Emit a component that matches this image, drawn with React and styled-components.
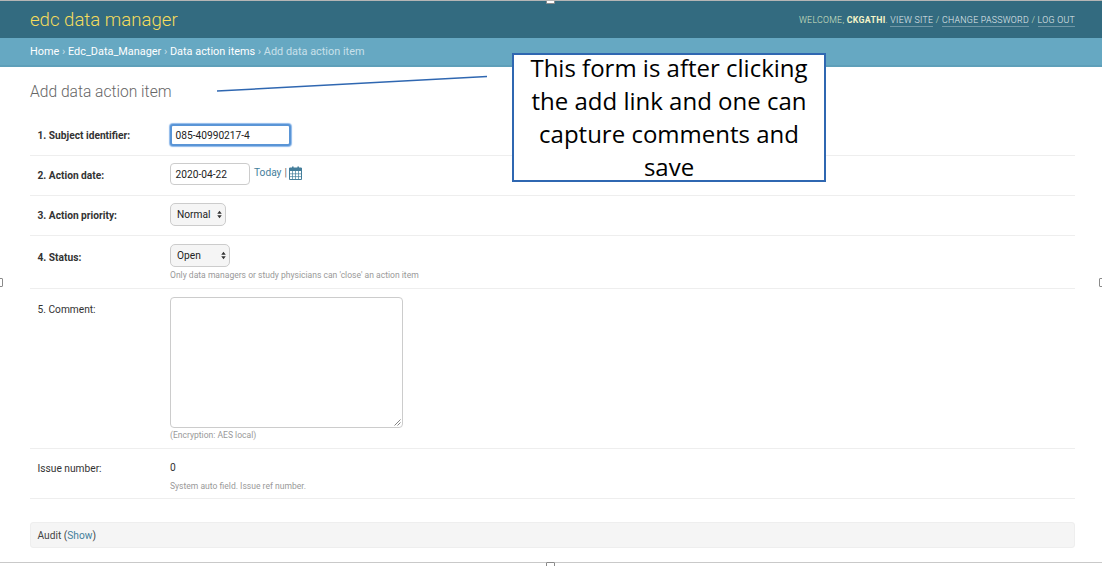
import React from 'react';
import styled, { createGlobalStyle } from 'styled-components';

const GlobalStyle = createGlobalStyle`
  html, body {
    margin: 0;
    padding: 0;
    background: #fff;
  }
  body {
    font-family: Roboto, "Liberation Sans", sans-serif;
    color: #333;
  }
`;

const Page = styled.div`
  position: relative;
  width: 1102px;
  height: 566px;
  overflow: hidden;
  box-sizing: border-box;
  border-top: 1px solid #b5b5b5;
`;

const Header = styled.header`
  display: flex;
  justify-content: space-between;
  align-items: center;
  height: 37px;
  padding: 0 27px 0 30px;
  background: #336b80;
`;

const Brand = styled.div`
  color: #f5dd5d;
  font-size: 18.6px;
  font-weight: 300;
`;

const UserTools = styled.div`
  color: #d8e6c4;
  font-size: 8.75px;
  letter-spacing: 0.3px;
  font-weight: 300;
  text-transform: uppercase;
  strong {
    font-weight: 700;
    color: #f5f5c8;
  }
`;

const ToolLink = styled.a`
  color: #e6eef0;
  border-bottom: 1px solid rgba(255, 255, 255, 0.3);
  padding-bottom: 1px;
`;

const Breadcrumbs = styled.nav`
  display: flex;
  align-items: center;
  height: 27px;
  padding: 0 30px;
  background: #66a8c2;
  border-bottom: 2px solid #5e9fb9;
  color: #c8e0ea;
  font-size: 10.9px;
  white-space: pre;
`;

const Crumb = styled.a`
  color: #fff;
`;

const Content = styled.main`
  padding: 0 27px 0 30px;
`;

const Title = styled.h1`
  margin: 0;
  padding: 16px 0 0;
  height: 48px;
  box-sizing: border-box;
  font-size: 15.6px;
  line-height: 18px;
  font-weight: 300;
  color: #666;
`;

const Row = styled.div`
  display: grid;
  grid-template-columns: 140px 1fr;
  height: ${(p) => p.$height}px;
  padding: ${(p) => p.$top}px 0 0;
  box-sizing: border-box;
  border-bottom: 1px solid #eee;
`;

const Label = styled.label`
  padding: ${(p) => p.$top ?? 5}px 0 0 7.5px;
  font-size: 10.2px;
  line-height: 13px;
  font-weight: ${(p) => (p.$bold ? 700 : 400)};
  color: #333;
`;

const Field = styled.div`
  display: flex;
  flex-direction: column;
  align-items: flex-start;
`;

const Inline = styled.div`
  display: flex;
  align-items: center;
`;

const TextInput = styled.div`
  box-sizing: border-box;
  width: ${(p) => p.$width}px;
  height: 22px;
  padding: 0 4.5px;
  display: flex;
  align-items: center;
  background: #fff;
  border: 1px solid #ccc;
  border-radius: 4px;
  font-size: 10.2px;
  color: #222;
  ${(p) => p.$focused && `
    border: 2px solid #5a95d6;
    border-radius: 3px;
    box-shadow: 0 0 1px 1px #8db8ea;
    padding: 0 3.5px;
  `}
`;

const Select = styled.div`
  box-sizing: border-box;
  width: ${(p) => p.$width}px;
  height: 23px;
  margin-top: -1px;
  padding: 0 6px;
  display: flex;
  justify-content: space-between;
  align-items: center;
  background: #f5f5f5;
  border: 1px solid #ccc;
  border-radius: 5px;
  font-size: 10.2px;
  color: #222;
`;

const Arrows = styled.svg`
  width: 5px;
  height: 9px;
  margin-right: -3px;
`;

const TodayLink = styled.a`
  margin: -3px 0 0 4px;
  color: #447e9b;
  font-size: 10.2px;
`;

const Divider = styled.span`
  margin: -3px 2px 0 3px;
  color: #666;
  font-size: 10.2px;
`;

const CalendarIcon = styled.svg`
  width: 13px;
  height: 14px;
  margin-top: -2px;
`;

const Help = styled.div`
  margin-top: ${(p) => p.$top}px;
  font-size: 8.55px;
  line-height: 11px;
  color: #999;
`;

const TextArea = styled.div`
  position: relative;
  box-sizing: border-box;
  width: 233px;
  height: 131px;
  background: #fff;
  border: 1px solid #ccc;
  border-radius: 4px;
`;

const Grip = styled.svg`
  position: absolute;
  right: 1px;
  bottom: 1px;
  width: 7px;
  height: 7px;
`;

const ReadOnly = styled.div`
  margin-top: 5px;
  font-size: 10.2px;
  line-height: 13px;
  color: #333;
`;

const Audit = styled.div`
  display: flex;
  align-items: center;
  box-sizing: border-box;
  height: 26px;
  margin-top: 23px;
  padding: 0 6.5px;
  background: #f5f5f5;
  border: 1px solid #eee;
  border-radius: 3px;
  font-size: 10.2px;
  color: #444;
  white-space: pre;
  a {
    color: #447e9b;
  }
`;

const Callout = styled.div`
  position: absolute;
  left: 512px;
  top: 52px;
  box-sizing: border-box;
  width: 314px;
  height: 129px;
  padding: 0 8px;
  background: #fff;
  border: 2px solid #2f67b1;
  font-family: "Open Sans", "Liberation Sans", sans-serif;
  font-size: 24px;
  line-height: 33px;
  text-align: center;
  color: #000;
`;

const CalloutText = styled.div`
  margin-top: -4px;
`;

const Arrow = styled.svg`
  position: absolute;
  left: 216px;
  top: 74px;
  width: 272px;
  height: 18px;
`;

const BottomRule = styled.div`
  position: absolute;
  left: 0;
  right: 0;
  top: 561px;
  height: 1px;
  background: #c9c9c9;
`;

const Handle = styled.div`
  position: absolute;
  box-sizing: border-box;
  width: 9px;
  height: 9px;
  background: #fff;
  border: 1px solid #8a8a8a;
  border-radius: 1px;
  left: ${(p) => p.$left}px;
  top: ${(p) => p.$top}px;
`;

const App = () => {
  return (
    <Page>
      <GlobalStyle />
      <Header>
        <Brand>edc data manager</Brand>
        <UserTools>
          Welcome, <strong>ckgathi</strong>. <ToolLink>View site</ToolLink> / <ToolLink>Change password</ToolLink> / <ToolLink>Log out</ToolLink>
        </UserTools>
      </Header>
      <Breadcrumbs>
        <Crumb>Home</Crumb> › <Crumb>Edc_Data_Manager</Crumb> › <Crumb>Data action items</Crumb> › Add data action item
      </Breadcrumbs>
      <Content>
        <Title>Add data action item</Title>
        <Row $height={41} $top={9}>
          <Label $bold>1. Subject identifier:</Label>
          <Field>
            <TextInput $width={121} $focused>085-40990217-4</TextInput>
          </Field>
        </Row>
        <Row $height={40} $top={7}>
          <Label $bold $top={6}>2. Action date:</Label>
          <Field>
            <Inline>
              <TextInput $width={80}>2020-04-22</TextInput>
              <TodayLink>Today</TodayLink>
              <Divider>|</Divider>
              <CalendarIcon viewBox="0 0 13 14">
                <path d="M3 0.5h1.6v2.5H3zM8.4 0.5H10v2.5H8.4z" fill="#447e9b" />
                <path d="M0.5 2h12v11.5H0.5z" fill="none" stroke="#447e9b" />
                <path d="M0.5 2h12v3H0.5z" fill="#447e9b" />
                <path d="M3.5 5v8M6.5 5v8M9.5 5v8M0.5 7.8h12M0.5 10.6h12" stroke="#447e9b" strokeWidth="0.7" />
              </CalendarIcon>
            </Inline>
          </Field>
        </Row>
        <Row $height={40} $top={8}>
          <Label $bold $top={5}>3. Action priority:</Label>
          <Field>
            <Select $width={56}>
              Normal
              <Arrows viewBox="0 0 6 10">
                <path d="M3 0.5L5.7 4H0.3zM3 9.5L0.3 6h5.4z" fill="#333" />
              </Arrows>
            </Select>
          </Field>
        </Row>
        <Row $height={53} $top={9}>
          <Label $bold $top={6}>4. Status:</Label>
          <Field>
            <Select $width={60}>
              Open
              <Arrows viewBox="0 0 6 10">
                <path d="M3 0.5L5.7 4H0.3zM3 9.5L0.3 6h5.4z" fill="#333" />
              </Arrows>
            </Select>
            <Help $top={3}>Only data managers or study physicians can 'close' an action item</Help>
          </Field>
        </Row>
        <Row $height={160} $top={8}>
          <Label $top={6}>5. Comment:</Label>
          <Field>
            <TextArea>
              <Grip viewBox="0 0 7 7">
                <path d="M0.5 6.5L6.5 0.5M3.5 6.5L6.5 3.5" stroke="#666" strokeWidth="0.8" />
              </Grip>
            </TextArea>
            <Help $top={2}>(Encryption: AES local)</Help>
          </Field>
        </Row>
        <Row $height={50} $top={7}>
          <Label $top={6}>Issue number:</Label>
          <Field>
            <ReadOnly>0</ReadOnly>
            <Help $top={7}>System auto field. Issue ref number.</Help>
          </Field>
        </Row>
        <Audit>
          Audit (<a>Show</a>)
        </Audit>
      </Content>

      <Arrow viewBox="0 0 272 18">
        <path d="M1 16L271 1.5" stroke="#2f67b1" strokeWidth="1.5" fill="none" />
      </Arrow>
      <Callout>
        <CalloutText>This form is after clicking the add link and one can capture comments and save</CalloutText>
      </Callout>
      <BottomRule />
      <Handle $left={546} $top={-6} />
      <Handle $left={-6} $top={277} />
      <Handle $left={1099} $top={277} />
      <Handle $left={546} $top={561} />
    </Page>
  );
};

export default App;
